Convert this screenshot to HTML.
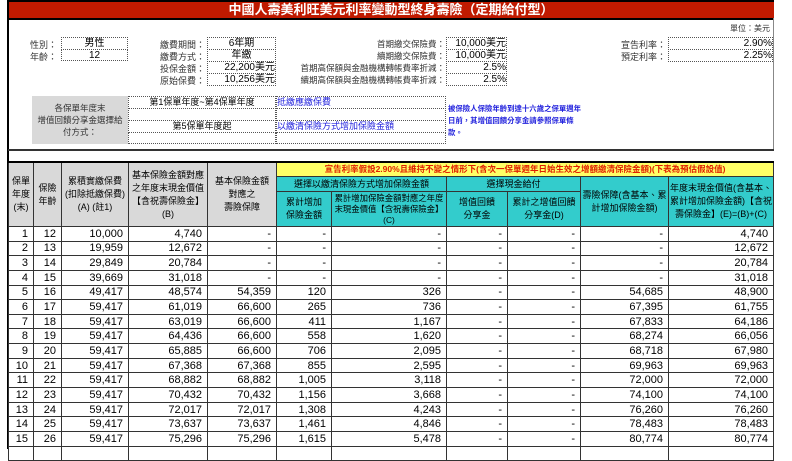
<!DOCTYPE html>
<html><head><meta charset="utf-8"><style>
*{margin:0;padding:0;box-sizing:border-box}
body{width:792px;height:449px;overflow:hidden;background:#fff;font-family:"Liberation Sans","Noto Sans CJK TC",sans-serif;position:relative;color:#000}
.a{position:absolute}
.lbl{font-size:9px;color:#333;text-align:right;white-space:nowrap}
.box{border:1px dotted #555;font-size:10px;white-space:nowrap;line-height:11px}
.blue{color:#2222dd;font-size:9px}
table{position:absolute;left:8px;top:162px;border-collapse:collapse;table-layout:fixed;width:765px}
td{border:1px solid #333;font-size:11px;text-align:right;padding:0 5px 0 2px;height:14.65px;line-height:12px;white-space:nowrap;overflow:hidden}
th{border:1px solid #333;font-size:9px;font-weight:normal;padding:0;overflow:hidden;vertical-align:middle}
th>div{overflow:hidden;display:flex;align-items:center;justify-content:center;text-align:center;padding:0 1px}
.g{background:#d9d9d9}
.t{background:#33cccc}
.y{background:#ffff66;color:#e02000;font-weight:bold}
</style></head><body>
<div class="a" style="left:8px;top:0;width:766px;height:2px;background:#000"></div>
<div class="a" style="left:8px;top:2px;width:766px;height:16px;background:#c01a00;color:#fff;font-weight:bold;font-size:13px;text-align:center;line-height:16px">中國人壽美利旺美元利率變動型終身壽險（定期給付型）</div>
<div class="a" style="left:8px;top:18px;width:766px;height:2px;background:#000"></div>
<div class="a" style="left:7px;top:0;width:2px;height:449px;background:#000"></div>
<div class="a" style="left:773px;top:18px;width:1px;height:132px;background:#888"></div>
<div class="a" style="left:8px;top:149px;width:766px;height:2px;background:#333"></div>
<div class="a lbl" style="left:730px;top:23px;font-size:8px">單位：美元</div>

<div class="a lbl" style="left:30px;top:38px">性別：</div>
<div class="a lbl" style="left:30px;top:50px">年齡：</div>
<div class="a box" style="left:61px;top:37px;width:67px;height:13px;text-align:center">男性</div>
<div class="a box" style="left:61px;top:49px;width:67px;height:12px;text-align:center">12</div>

<div class="a lbl" style="left:160px;top:38px;width:45px">繳費期間：</div>
<div class="a lbl" style="left:160px;top:50px;width:45px">繳費方式：</div>
<div class="a lbl" style="left:160px;top:62px;width:45px">投保金額：</div>
<div class="a lbl" style="left:160px;top:74px;width:45px">原始保費：</div>
<div class="a box" style="left:207px;top:37px;width:69px;height:13px;text-align:center">6年期</div>
<div class="a box" style="left:207px;top:49px;width:69px;height:13px;text-align:center">年繳</div>
<div class="a box" style="left:207px;top:61px;width:69px;height:13px;text-align:right">22,200美元</div>
<div class="a box" style="left:207px;top:73px;width:69px;height:13px;text-align:right">10,256美元</div>

<div class="a lbl" style="left:280px;top:38px;width:165px;font-size:8.5px">首期繳交保險費：</div>
<div class="a lbl" style="left:280px;top:50px;width:165px;font-size:8.5px">續期繳交保險費：</div>
<div class="a lbl" style="left:280px;top:62px;width:165px;font-size:8.5px">首期高保額與金融機構轉帳費率折減：</div>
<div class="a lbl" style="left:280px;top:74px;width:165px;font-size:8.5px">續期高保額與金融機構轉帳費率折減：</div>
<div class="a box" style="left:446px;top:37px;width:61px;height:13px;text-align:right">10,000美元</div>
<div class="a box" style="left:446px;top:49px;width:61px;height:13px;text-align:right">10,000美元</div>
<div class="a box" style="left:446px;top:61px;width:61px;height:13px;text-align:right">2.5%</div>
<div class="a box" style="left:446px;top:73px;width:61px;height:13px;text-align:right">2.5%</div>

<div class="a lbl" style="left:620px;top:38px;width:46px">宣告利率：</div>
<div class="a lbl" style="left:620px;top:50px;width:46px">預定利率：</div>
<div class="a box" style="left:668px;top:37px;width:105px;height:13px;text-align:right">2.90%</div>
<div class="a box" style="left:668px;top:49px;width:105px;height:13px;text-align:right">2.25%</div>

<div class="a" style="left:32px;top:96px;width:96px;height:48px;background:#d9d9d9;font-size:8.5px;color:#333;text-align:center;line-height:12px;padding:6px 2px 0">各保單年度末<br>增值回饋分享金選擇給付方式：</div>
<div class="a box" style="left:128px;top:96px;width:148px;height:13px;text-align:center;font-size:9px">第1保單年度~第4保單年度</div>
<div class="a box" style="left:128px;top:108px;width:148px;height:13px"></div>
<div class="a box" style="left:128px;top:120px;width:148px;height:13px;text-align:center;font-size:9px">第5保單年度起</div>
<div class="a box" style="left:128px;top:132px;width:148px;height:12px"></div>
<div class="a box blue" style="left:276px;top:96px;width:170px;height:13px">抵繳應繳保費</div>
<div class="a box" style="left:276px;top:108px;width:170px;height:13px"></div>
<div class="a box blue" style="left:276px;top:120px;width:170px;height:13px">以繳清保險方式增加保險金額</div>
<div class="a box" style="left:276px;top:132px;width:170px;height:12px"></div>
<div class="a blue" style="left:448px;top:103px;width:136px;line-height:12px;font-size:7.4px;font-weight:bold">被保險人保險年齡到達十六歲之保單週年日前，其增值回饋分享金請參照保單條款。</div>

<table>
<colgroup><col style="width:25px"><col style="width:28px"><col style="width:67px"><col style="width:79px"><col style="width:69px"><col style="width:55px"><col style="width:115px"><col style="width:61px"><col style="width:73px"><col style="width:88px"><col style="width:105px"></colgroup>
<tr><th rowspan="3" class="g"><div style="height:63px;line-height:13px">保單<br>年度<br>(末)</div></th><th rowspan="3" class="g"><div style="height:63px;line-height:13px">保險<br>年齡</div></th><th rowspan="3" class="g"><div style="height:63px;line-height:13px">累積實繳保費(扣除抵繳保費)<br>(A) (註1)</div></th><th rowspan="3" class="g"><div style="height:63px;line-height:13px">基本保險金額對應之年度末現金價值【含祝壽保險金】(B)</div></th><th rowspan="3" class="g"><div style="height:63px;line-height:13px">基本保險金額<br>對應之<br>壽險保障</div></th><th colspan="6" class="y"><div style="height:13px;line-height:13px;white-space:nowrap;font-size:8.5px">宣告利率假設2.90%且維持不變之情形下(含次一保單週年日始生效之增額繳清保險金額)(下表為預估假設值)</div></th></tr>
<tr><th colspan="2" class="t"><div style="height:13px;line-height:13px">選擇以繳清保險方式增加保險金額</div></th><th colspan="2" class="t"><div style="height:13px;line-height:13px">選擇現金給付</div></th><th rowspan="2" class="t"><div style="height:48px;line-height:13px">壽險保障(含基本、累計增加保險金額)</div></th><th rowspan="2" class="t"><div style="height:48px;line-height:13px">年度末現金價值(含基本、累計增加保險金額)【含祝壽保險金】(E)=(B)+(C)</div></th></tr>
<tr><th class="t"><div style="height:34px;line-height:13px">累計增加<br>保險金額</div></th><th class="t"><div style="height:34px;line-height:11px;font-size:8.4px;padding:0">累計增加保險金額對應之年度末現金價值【含祝壽保險金】<br>(C)</div></th><th class="t"><div style="height:34px;line-height:13px">增值回饋<br>分享金</div></th><th class="t"><div style="height:34px;line-height:13px">累計之增值回饋分享金(D)</div></th></tr>
<tr><td>1</td><td>12</td><td>10,000</td><td>4,740</td><td>-</td><td>-</td><td>-</td><td>-</td><td>-</td><td>-</td><td>4,740</td></tr>
<tr><td>2</td><td>13</td><td>19,959</td><td>12,672</td><td>-</td><td>-</td><td>-</td><td>-</td><td>-</td><td>-</td><td>12,672</td></tr>
<tr><td>3</td><td>14</td><td>29,849</td><td>20,784</td><td>-</td><td>-</td><td>-</td><td>-</td><td>-</td><td>-</td><td>20,784</td></tr>
<tr><td>4</td><td>15</td><td>39,669</td><td>31,018</td><td>-</td><td>-</td><td>-</td><td>-</td><td>-</td><td>-</td><td>31,018</td></tr>
<tr><td>5</td><td>16</td><td>49,417</td><td>48,574</td><td>54,359</td><td>120</td><td>326</td><td>-</td><td>-</td><td>54,685</td><td>48,900</td></tr>
<tr><td>6</td><td>17</td><td>59,417</td><td>61,019</td><td>66,600</td><td>265</td><td>736</td><td>-</td><td>-</td><td>67,395</td><td>61,755</td></tr>
<tr><td>7</td><td>18</td><td>59,417</td><td>63,019</td><td>66,600</td><td>411</td><td>1,167</td><td>-</td><td>-</td><td>67,833</td><td>64,186</td></tr>
<tr><td>8</td><td>19</td><td>59,417</td><td>64,436</td><td>66,600</td><td>558</td><td>1,620</td><td>-</td><td>-</td><td>68,274</td><td>66,056</td></tr>
<tr><td>9</td><td>20</td><td>59,417</td><td>65,885</td><td>66,600</td><td>706</td><td>2,095</td><td>-</td><td>-</td><td>68,718</td><td>67,980</td></tr>
<tr><td>10</td><td>21</td><td>59,417</td><td>67,368</td><td>67,368</td><td>855</td><td>2,595</td><td>-</td><td>-</td><td>69,963</td><td>69,963</td></tr>
<tr><td>11</td><td>22</td><td>59,417</td><td>68,882</td><td>68,882</td><td>1,005</td><td>3,118</td><td>-</td><td>-</td><td>72,000</td><td>72,000</td></tr>
<tr><td>12</td><td>23</td><td>59,417</td><td>70,432</td><td>70,432</td><td>1,156</td><td>3,668</td><td>-</td><td>-</td><td>74,100</td><td>74,100</td></tr>
<tr><td>13</td><td>24</td><td>59,417</td><td>72,017</td><td>72,017</td><td>1,308</td><td>4,243</td><td>-</td><td>-</td><td>76,260</td><td>76,260</td></tr>
<tr><td>14</td><td>25</td><td>59,417</td><td>73,637</td><td>73,637</td><td>1,461</td><td>4,846</td><td>-</td><td>-</td><td>78,483</td><td>78,483</td></tr>
<tr><td>15</td><td>26</td><td>59,417</td><td>75,296</td><td>75,296</td><td>1,615</td><td>5,478</td><td>-</td><td>-</td><td>80,774</td><td>80,774</td></tr>
<tr><td></td><td></td><td></td><td></td><td></td><td></td><td></td><td></td><td></td><td></td><td></td></tr>
</table>
<div class="a" style="left:8px;top:161px;width:766px;height:2px;background:#000"></div>
</body></html>
